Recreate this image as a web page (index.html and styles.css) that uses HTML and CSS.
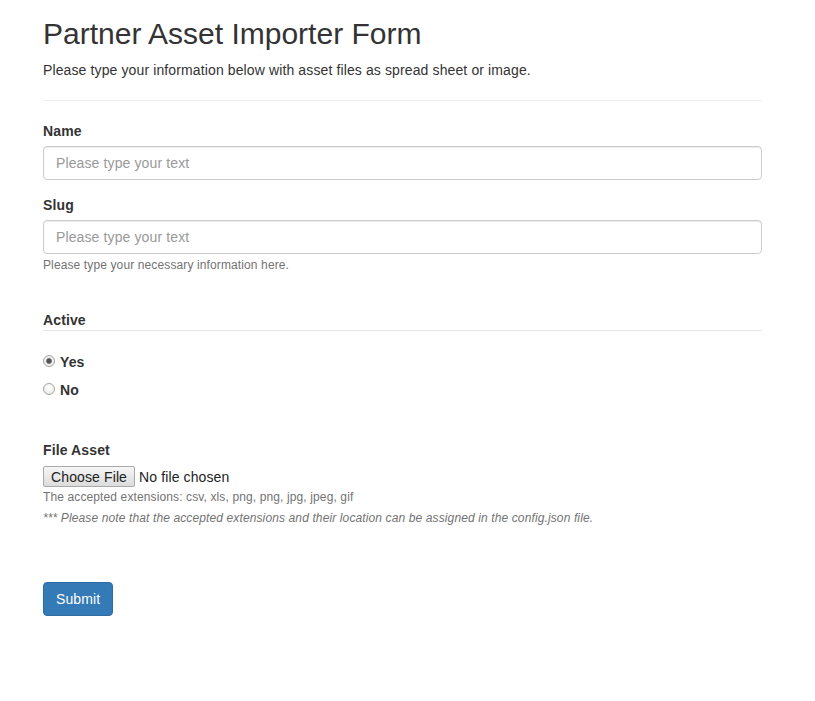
FILE: index.html
```html
<!DOCTYPE html>
<html lang="en">
<head>
<meta charset="utf-8">
<title>Partner Asset Importer Form</title>
<link rel="stylesheet" href="styles.css">
</head>
<body>
<div class="page">
  <h2 class="title">Partner Asset Importer Form</h2>
  <p class="lead-text">Please type your information below with asset files as spread sheet or image.</p>
  <hr class="divider">
  <form class="form">
    <div class="group">
      <label class="label" for="name">Name</label>
      <input class="control" id="name" type="text" placeholder="Please type your text">
    </div>
    <div class="group">
      <label class="label" for="slug">Slug</label>
      <input class="control" id="slug" type="text" placeholder="Please type your text">
      <div class="help">Please type your necessary information here.</div>
    </div>
    <div class="fieldset">
      <div class="legend">Active</div>
      <div class="radios">
        <label class="radio"><input class="radio-input" type="radio" name="active" checked><span>Yes</span></label>
        <label class="radio"><input class="radio-input" type="radio" name="active"><span>No</span></label>
      </div>
    </div>
    <div class="file-group">
      <label class="label" for="file">File Asset</label>
      <input class="file" id="file" type="file">
      <div class="help help-tight">The accepted extensions: csv, xls, png, png, jpg, jpeg, gif</div>
      <div class="help help-note">*** Please note that the accepted extensions and their location can be assigned in the config.json file.</div>
    </div>
    <button class="submit" type="button">Submit</button>
  </form>
</div>
</body>
</html>
```
FILE: styles.css
```css
* { box-sizing: border-box; }
html, body { margin: 0; padding: 0; background: #fff; }
body {
  font-family: "Liberation Sans", Arial, Helvetica, sans-serif;
  font-size: 14px;
  line-height: 20px;
  color: #333;
  letter-spacing: 0.12px;
}
.page {
  width: 762px;
  padding-left: 43px;
}
.title {
  margin: 17px 0 10px;
  font-size: 30px;
  font-weight: 400;
  line-height: 33px;
  color: #333;
  letter-spacing: 0;
}
.lead-text {
  margin: 0;
  line-height: 20px;
}
.divider {
  margin: 20px 0 20px;
  border: 0;
  border-top: 1px solid #eee;
  height: 0;
}
.form { display: block; }
.group { margin-bottom: 15px; }
.label {
  display: block;
  font-weight: 700;
  margin-bottom: 5px;
  line-height: 20px;
}
.control {
  display: block;
  width: 100%;
  height: 34px;
  padding: 6px 12px;
  font-family: inherit;
  font-size: 14px;
  line-height: 20px;
  letter-spacing: 0.12px;
  color: #555;
  background: #fff;
  border: 1px solid #ccc;
  border-radius: 4px;
  box-shadow: inset 0 1px 1px rgba(0,0,0,.075);
  outline: none;
}
.control::placeholder { color: #999; }
.help {
  font-size: 12px;
  line-height: 17px;
  color: #737373;
}
.group .help { margin-top: 3px; }
.fieldset {
  margin-top: 36px;
}
.legend {
  font-weight: 700;
  line-height: 20px;
  border-bottom: 1px solid #e5e5e5;
}
.radios {
  display: flex;
  flex-direction: column;
  gap: 8px;
  margin-top: 21px;
}
.radio {
  display: flex;
  align-items: center;
  gap: 5px;
  font-weight: 700;
  line-height: 20px;
  height: 20px;
}
.radio-input {
  -webkit-appearance: none;
  appearance: none;
  margin: 0 0 2px 0;
  width: 12px;
  height: 12px;
  border-radius: 50%;
  border: 1px solid #a5a5a5;
  background: radial-gradient(circle at 50% 35%, #fff 0%, #f2f2f2 55%, #dcdcdc 100%);
}
.radio-input:checked {
  background: radial-gradient(circle, #555 0 2.4px, #8a8a8a 2.6px, #f3f3f3 3.4px, #e0e0e0 100%);
}
.file-group {
  margin-top: 40px;
}
.file-group .label { margin-bottom: 6px; }
.file {
  display: block;
  font-family: inherit;
  font-size: 14px;
  line-height: 19px;
  height: 21px;
  color: #222;
  letter-spacing: 0.12px;
}
.file::file-selector-button {
  font-family: inherit;
  font-size: 14px;
  letter-spacing: 0.12px;
  height: 21px;
  padding: 0 7px;
  margin: 0 4px 0 0;
  color: #222;
  border: 1px solid #a9a9a9;
  border-radius: 2px;
  background: linear-gradient(#f6f6f6, #dcdcdc);
}
.help-tight { margin-top: 2px; }
.help-note {
  margin-top: 4px;
  font-style: italic;
}
.submit {
  display: block;
  margin-top: 55px;
  height: 34px;
  padding: 6px 12px;
  font-family: inherit;
  font-size: 14px;
  line-height: 20px;
  letter-spacing: 0.12px;
  color: #fff;
  background: #337ab7;
  border: 1px solid #2e6da4;
  border-radius: 4px;
}
```
